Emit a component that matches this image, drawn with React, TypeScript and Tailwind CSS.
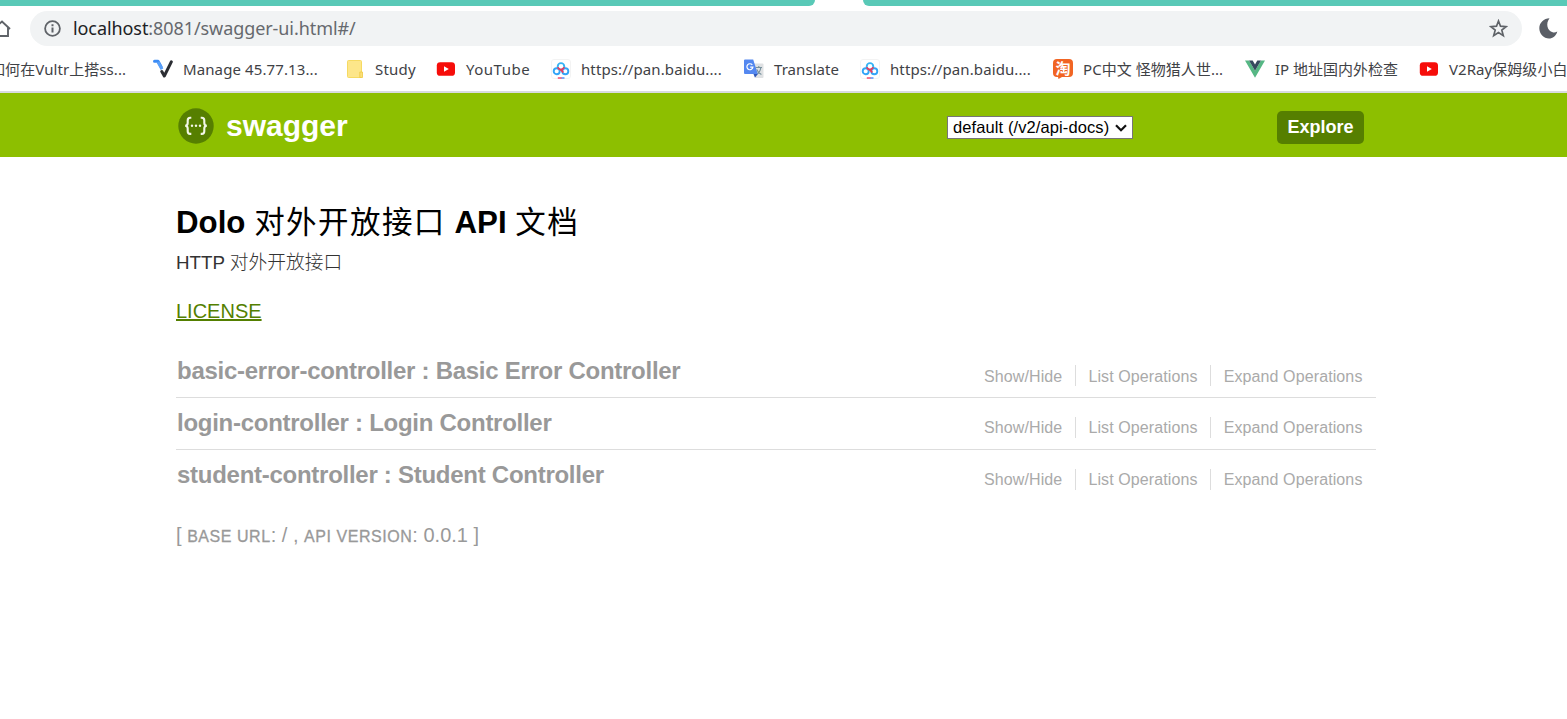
import type { ReactNode } from 'react';

function VultrIcon() {
  return (
    <svg width="20" height="20" viewBox="0 0 20 20" fill="none" strokeLinecap="round" strokeLinejoin="round">
      <path d="M1.5 2.2H5L8.2 8" stroke="#3b8bf5" strokeWidth="3" />
      <path d="M8.8 12.5L11.3 17L18.3 2.8" stroke="#2b2d33" strokeWidth="3" />
      <path d="M5 3L9 10.2" stroke="#5aa0f8" strokeWidth="3" strokeLinecap="butt" />
    </svg>
  );
}

function FolderIcon() {
  return (
    <svg width="20" height="20" viewBox="0 0 20 20">
      <rect x="2.5" y="1.5" width="14" height="17" rx="1" fill="#fde68a" stroke="#f6da62" />
      <path d="M14.8 13h2.7v5.5h-2.7z" fill="#fbe07a" stroke="#efc943" strokeWidth="0.8" />
    </svg>
  );
}

function YoutubeIcon() {
  return (
    <svg width="20" height="20" viewBox="0 0 20 20">
      <rect x="0.8" y="3.2" width="18.2" height="13.6" rx="3.4" fill="#f60d0a" />
      <path d="M8 7.3L12.8 10L8 12.7Z" fill="#fff" />
    </svg>
  );
}

function BaiduIcon() {
  return (
    <svg width="20" height="20" viewBox="0 0 20 20" fill="none">
      <rect x="0.5" y="0.5" width="19" height="19" rx="2.5" fill="#fff" stroke="#f3f3f3" />
      <circle cx="5.7" cy="12.2" r="3" stroke="#32a5f8" strokeWidth="1.9" />
      <circle cx="14.3" cy="12.2" r="3" stroke="#32a5f8" strokeWidth="1.9" />
      <circle cx="10" cy="7.4" r="3.3" stroke="#35b3f5" strokeWidth="1.9" />
      <path d="M6.8 8.3c.6 1.900 2.200 2.100 3.200 2.600 1 .6 1.300 1.700 2.300 2.600" stroke="#e93c60" strokeWidth="1.9" />
      <path d="M13.2 8.3c-.5 1.600-1.800 2.100-3.200 2.600" stroke="#e93c60" strokeWidth="1.9" />
      <path d="M6.8 19h4" stroke="#ee2f55" strokeWidth="1.3" />
      <path d="M10.5 19h3" stroke="#3b82f6" strokeWidth="1.3" />
    </svg>
  );
}

function TranslateIcon() {
  return (
    <svg width="20" height="20" viewBox="0 0 20 20" fill="none">
      <path d="M8 4.5h10.5a1 1 0 0 1 1 1v12.5a1 1 0 0 1-1 1H12z" fill="#dfe1e3" />
      <path d="M11.5 8.5H18M14.8 7v1.5M12.3 15.5c2.5-1.2 4-3.3 4.5-6.8M12.8 10.3c.6 2.2 2.3 4 4.6 5.2" stroke="#77919d" strokeWidth="1.1" />
      <path d="M1 .5h8.2L13.8 15H1a1 1 0 0 1-1-1V1.5a1 1 0 0 1 1-1z" fill="#5488f0" />
      <path d="M9.5 15h4.3L11 18.8z" fill="#3157b5" />
      <path d="M8.3 5.9a3 3 0 1 0 .6 2.2H6.2" stroke="#fff" strokeWidth="1.2" />
    </svg>
  );
}

function TaobaoIcon() {
  return (
    <div className="relative flex h-5 w-5 items-start justify-center">
      <svg className="absolute inset-0" width="20" height="20" viewBox="0 0 20 20">
        <path d="M4 0h12a4 4 0 0 1 4 4v10a4 4 0 0 1-4 4H9l-3.5 2L5 18H4a4 4 0 0 1-4-4V4a4 4 0 0 1 4-4z" fill="#f16524" />
      </svg>
      <span className="relative font-['Noto_Sans_CJK_SC',sans-serif] text-[15px] leading-[17px] font-bold text-white">淘</span>
    </div>
  );
}

function VueIcon() {
  return (
    <svg width="20" height="20" viewBox="0 0 20 20">
      <path d="M0 1.4h4L10 11.8L16 1.4h4L10 18.7z" fill="#56b784" />
      <path d="M4 1.4h3.7L10 5.4l2.3-4H16L10 11.8z" fill="#35495e" />
    </svg>
  );
}

type Bookmark = { label: string; width: string; spacing: string; icon: ReactNode };

const bookmarks: Bookmark[] = [
  { label: 'Manage 45.77.13...', width: 'w-[192px]', spacing: 'tracking-[0.11px]', icon: <VultrIcon /> },
  { label: 'Study', width: 'w-[91px]', spacing: 'tracking-[0.2px]', icon: <FolderIcon /> },
  { label: 'YouTube', width: 'w-[115px]', spacing: 'tracking-[0.5px]', icon: <YoutubeIcon /> },
  { label: 'https://pan.baidu....', width: 'w-[193px]', spacing: 'tracking-[0.1px]', icon: <BaiduIcon /> },
  { label: 'Translate', width: 'w-[116px]', spacing: 'tracking-[0.06px]', icon: <TranslateIcon /> },
  { label: 'https://pan.baidu....', width: 'w-[193px]', spacing: 'tracking-[0.1px]', icon: <BaiduIcon /> },
  { label: 'PC中文 怪物猎人世...', width: 'w-[192px]', spacing: 'tracking-[0.05px]', icon: <TaobaoIcon /> },
  { label: 'IP 地址国内外检查', width: 'w-[174px]', spacing: 'tracking-normal', icon: <VueIcon /> },
  { label: 'V2Ray保姆级小白', width: 'w-[170px]', spacing: 'tracking-[0.05px]', icon: <YoutubeIcon /> },
];

function BrowserChrome() {
  return (
    <div className="font-['Noto_Sans','Noto_Sans_CJK_SC',sans-serif]">
      <div className="flex h-[6px] justify-between bg-white">
        <div className="w-[815px] rounded-br-[7px] bg-[#59c9b7]" />
        <div className="w-[704px] rounded-bl-[7px] bg-[#59c9b7]" />
      </div>
      <div className="flex h-10 items-start pt-[5px]">
        <svg className="mt-[9px] -ml-[8px] shrink-0" width="20" height="18" viewBox="0 0 20 18" fill="none" stroke="#5f6368" strokeWidth="1.9">
          <path d="M0.8 9.5L10 1.5L18 9M3.5 8v8h12.5V7.5" />
        </svg>
        <div className="ml-[18px] flex h-[35px] w-[1492px] items-center rounded-full bg-[#f1f3f4] pr-[14px] pl-[14px]">
          <svg width="17" height="17" viewBox="0 0 17 17" fill="none" stroke="#5f6368" strokeWidth="1.8">
            <circle cx="8.5" cy="8.5" r="7.4" />
            <path d="M8.5 7.5v5M8.5 4.2v2" strokeWidth="2" />
          </svg>
          <span className="-mt-[2px] ml-[12px] text-[18px] leading-[24px] tracking-[-0.08px] text-[#66696e]">
            <span className="text-[#202124]">localhost</span>:8081/swagger-ui.html#/
          </span>
          <svg className="ml-auto" width="19" height="19" viewBox="0 0 19 19" fill="none" stroke="#5f6368" strokeWidth="1.7">
            <path d="M9.5 2L11.5 7.2L17.1 7.6L12.8 11.1L14.3 16.6L9.5 13.6L4.7 16.6L6.2 11.1L1.9 7.6L7.5 7.2Z" />
          </svg>
        </div>
        <svg className="mt-[7px] ml-[17px] shrink-0" width="20" height="21" viewBox="0 0 20 21">
          <path d="M10.5.3C5 .4.3 4.8.3 10.2c0 5.8 4.5 10.3 9.7 10.3 3.7 0 7-2.2 8.3-7-1.6.9-3.1 1.2-4.6.8C8.4 13 6.3 5.8 10.5.3z" fill="#5a5e66" />
        </svg>
      </div>
      <div className="flex h-[47px] overflow-hidden border-b-2 border-[#d9dbe0] text-[15px] whitespace-nowrap text-[#3f4246]">
        <div className="flex h-[46px] w-[153px] shrink-0 items-center">
          <span className="-ml-[10px] tracking-[0.07px]">如何在Vultr上搭ss...</span>
        </div>
        {bookmarks.map((b, i) => (
          <div key={i} className={`flex h-[46px] shrink-0 items-center gap-[10px] ${b.width}`}>
            <div className="shrink-0">{b.icon}</div>
            <span className={b.spacing}>{b.label}</span>
          </div>
        ))}
      </div>
    </div>
  );
}

function SwaggerLogo() {
  return (
    <svg className="mt-[2px]" width="36" height="36" viewBox="0 0 36 36" fill="none">
      <circle cx="18" cy="18" r="17.7" fill="#567f00" />
      <g stroke="#f3f7e8" strokeWidth="2.1">
        <path d="M13.300 9.800h-1.200c-1.800 0-2.400.9-2.400 2.600v2.600c0 1.800-.6 2.700-2.500 2.800 1.900.1 2.500 1.100 2.500 2.800v2.700c0 1.700.6 2.600 2.400 2.600h1.200" />
        <path d="M22.700 9.800h1.200c1.800 0 2.400.9 2.400 2.600v2.600c0 1.800.6 2.700 2.500 2.800-1.900.1-2.500 1.100-2.500 2.800v2.700c0 1.700-.6 2.600-2.400 2.600h-1.200" />
      </g>
      <g fill="#f3f7e8">
        <circle cx="14" cy="17.800" r="1.200" />
        <circle cx="18" cy="17.800" r="1.200" />
        <circle cx="22" cy="17.800" r="1.200" />
      </g>
    </svg>
  );
}

function Header() {
  return (
    <header className="flex h-16 items-center bg-[#8dbf00] pl-[178px]">
      <a className="flex w-[769px] items-center gap-[12px] text-[30px] font-bold text-white">
        <SwaggerLogo />
        <span>swagger</span>
      </a>
      <div className="mt-[5px] flex h-[23px] w-[186px] items-center justify-between border border-[#767676] bg-white pr-[5px] pl-[5px] text-[16.5px] tracking-[0.1px] text-black">
        <span className="whitespace-nowrap">default (/v2/api-docs)</span>
        <svg width="12" height="8" viewBox="0 0 12 8" fill="none" stroke="#111" strokeWidth="2.2">
          <path d="M1 1.2L6 6.2L11 1.2" />
        </svg>
      </div>
      <button className="mt-[4px] ml-[144px] flex h-[33px] w-[87px] items-center justify-center rounded-[5px] bg-[#567f00] text-[18px] font-bold text-white">
        Explore
      </button>
    </header>
  );
}

const controllers = [
  { name: 'basic-error-controller : Basic Error Controller', linkLeading: 'leading-[23px]' },
  { name: 'login-controller : Login Controller', linkLeading: 'leading-[21px]' },
  { name: 'student-controller : Student Controller', linkLeading: 'leading-[21px]' },
];

export default function App() {
  return (
    <div className="h-[719px] w-[1567px] overflow-hidden bg-white font-['Liberation_Sans','Noto_Sans_CJK_SC',sans-serif]">
      <BrowserChrome />
      <Header />
      <main className="ml-[176px] w-[1200px] pt-[45px]">
        <h1 className="h-[40px] text-[31.25px] leading-[40px] font-bold text-black">
          Dolo <span className="text-[30.5px] font-normal tracking-[1.45px]">对外开放接口</span> API <span className="text-[30.5px] font-normal tracking-[1.45px]">文档</span>
        </h1>
        <p className="mt-[7px] h-[28px] text-[18.75px] leading-[28px] text-[#333]">
          HTTP <span className="font-light">对外开放接口</span>
        </p>
        <a className="mt-[20px] block h-[28px] text-[20px] leading-[28px] text-[#547f00] underline">LICENSE</a>
        <ul className="mt-[21px]">
          {controllers.map(({ name, linkLeading }) => (
            <li key={name} className="flex h-[52px] justify-between border-b border-[#ddd] pl-[1px] last:border-transparent">
              <h2 className="mt-[9px] text-[24px] leading-[32px] font-bold tracking-[-0.27px] text-[#999]">{name}</h2>
              <div className={`mt-[19px] mr-[1px] flex h-[21px] text-[16px] tracking-[0.11px] whitespace-nowrap text-[#aaa] ${linkLeading}`}>
                <span className="border-r border-[#ddd] px-[12.5px]">Show/Hide</span>
                <span className="border-r border-[#ddd] px-[12.5px]">List Operations</span>
                <span className="px-[12.5px]">Expand Operations</span>
              </div>
            </li>
          ))}
        </ul>
        <footer className="mt-[18px] text-[20px] leading-[30px] text-[#999]">
          [ <span className="text-[16px] tracking-[0.55px] [-webkit-text-stroke:0.3px_#999]">BASE URL</span>: / ,{' '}
          <span className="text-[16px] tracking-[0.55px] [-webkit-text-stroke:0.3px_#999]">API VERSION</span>: 0.0.1 ]
        </footer>
      </main>
    </div>
  );
}
